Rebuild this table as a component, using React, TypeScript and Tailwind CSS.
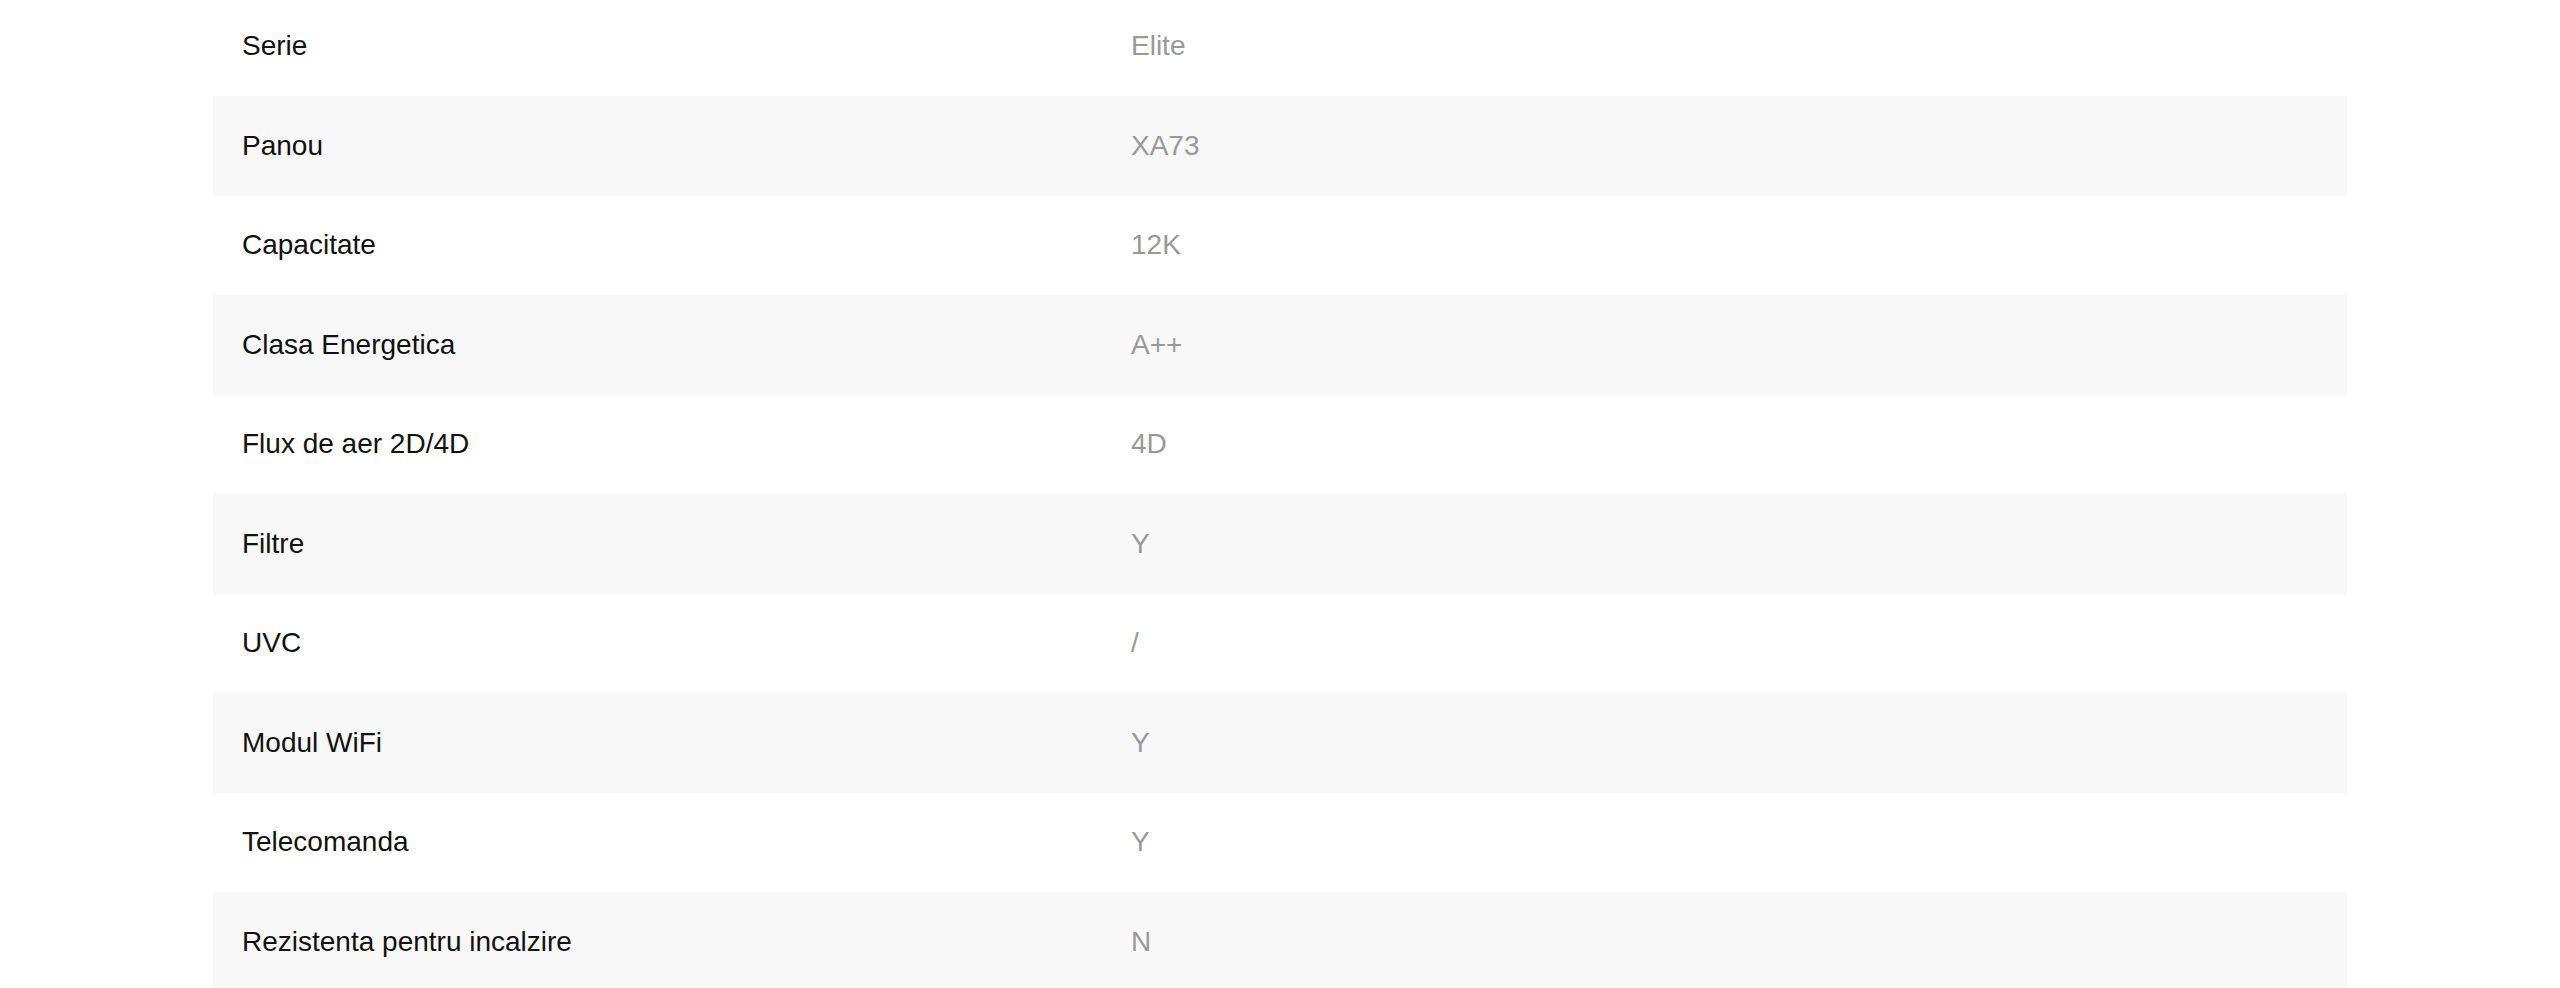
const specs: [string, string][] = [
  ['Serie', 'Elite'],
  ['Panou', 'XA73'],
  ['Capacitate', '12K'],
  ['Clasa Energetica', 'A++'],
  ['Flux de aer 2D/4D', '4D'],
  ['Filtre', 'Y'],
  ['UVC', '/'],
  ['Modul WiFi', 'Y'],
  ['Telecomanda', 'Y'],
  ['Rezistenta pentru incalzire', 'N'],
]

export default function App() {
  return (
    <div
      className="min-h-screen bg-white overflow-hidden"
      style={{ fontFamily: '"Liberation Sans", Arial, sans-serif' }}
    >
      <div className="mx-auto w-[2134px] mt-[-3.5px]">
        {specs.map(([label, value], i) => (
          <div
            key={label}
            className={`grid grid-cols-[889px_1fr] items-center h-[99.5px] px-[29px] text-[28px] ${
              i % 2 === 1 ? 'bg-[#f8f8f8]' : 'bg-white'
            }`}
          >
            <span className="text-[#111111]">{label}</span>
            <span className="text-[#999999]">{value}</span>
          </div>
        ))}
      </div>
    </div>
  )
}
